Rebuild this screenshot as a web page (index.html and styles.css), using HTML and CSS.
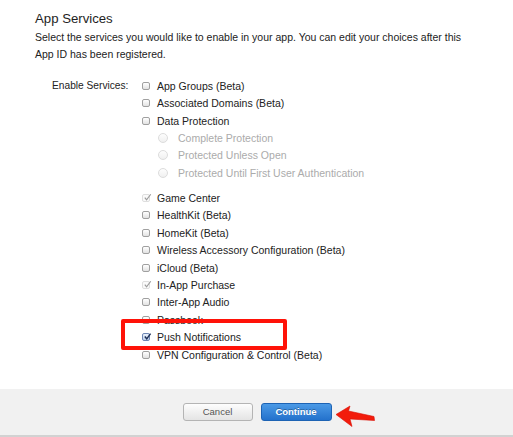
FILE: index.html
```html
<!DOCTYPE html>
<html>
<head>
<meta charset="utf-8">
<link rel="stylesheet" href="styles.css">
</head>
<body>
<div class="page">
  <div class="content">
    <h2 class="title">App Services</h2>
    <p class="desc">Select the services you would like to enable in your app. You can edit your choices after this App ID has been registered.</p>
    <div class="services">
      <div class="services-label">Enable Services:</div>
      <ul class="list">
        <li class="item"><span class="cb"></span>App Groups (Beta)</li>
        <li class="item"><span class="cb"></span>Associated Domains (Beta)</li>
        <li class="item"><span class="cb"></span>Data Protection</li>
        <li class="item sub"><span class="radio"></span>Complete Protection</li>
        <li class="item sub"><span class="radio"></span>Protected Unless Open</li>
        <li class="item sub last-sub"><span class="radio"></span>Protected Until First User Authentication</li>
        <li class="item"><span class="cb cb-disabled"><svg viewBox="0 0 10 10" class="check"><path d="M2 5.2 L4 7.6 L8.6 1.4" fill="none" stroke="#9c9c9c" stroke-width="1.3"/></svg></span>Game Center</li>
        <li class="item"><span class="cb"></span>HealthKit (Beta)</li>
        <li class="item"><span class="cb"></span>HomeKit (Beta)</li>
        <li class="item"><span class="cb"></span>Wireless Accessory Configuration (Beta)</li>
        <li class="item"><span class="cb"></span>iCloud (Beta)</li>
        <li class="item"><span class="cb cb-disabled"><svg viewBox="0 0 10 10" class="check"><path d="M2 5.2 L4 7.6 L8.6 1.4" fill="none" stroke="#9c9c9c" stroke-width="1.3"/></svg></span>In-App Purchase</li>
        <li class="item"><span class="cb"></span>Inter-App Audio</li>
        <li class="item"><span class="cb"></span>Passbook</li>
        <li class="item"><span class="cb cb-checked"><svg viewBox="0 0 10 10" class="check"><path d="M2 5 L4.2 7.6 L8.4 1.8" fill="none" stroke="#1d2f57" stroke-width="1.6"/></svg></span>Push Notifications</li>
        <li class="item"><span class="cb"></span>VPN Configuration &amp; Control (Beta)</li>
      </ul>
    </div>
  </div>
  <div class="footer">
    <button class="btn btn-cancel">Cancel</button>
    <button class="btn btn-continue">Continue</button>
  </div>
  <div class="highlight"></div>
  <svg class="arrow" width="60" height="30" viewBox="326 402 50 30">
    <polygon points="331,414.5 345,406 343.5,411 369,416.5 369.5,420.5 345,419 347,426.5" fill="#f21c0c" stroke="#d80e04" stroke-width="0.6" stroke-linejoin="round"/>
  </svg>
</div>
</body>
</html>
```

FILE: styles.css
```css
html, body {
  margin: 0;
  padding: 0;
  background: #ffffff;
}

.page {
  position: relative;
  width: 513px;
  height: 437px;
  display: flex;
  flex-direction: column;
  font-family: "Liberation Sans", Arial, sans-serif;
  color: #222222;
  overflow: hidden;
}

.content {
  flex: 1;
  padding: 11px 0 0 35px;
}

.title {
  margin: 0;
  font-size: 13.2px;
  line-height: 16px;
  font-weight: normal;
  color: #1e1e1e;
}

.desc {
  margin: 2px 0 0 0;
  width: 440px;
  font-size: 10.5px;
  line-height: 17px;
  color: #222222;
}

.services {
  display: flex;
  margin-top: 14px;
  padding-left: 17px;
}

.services-label {
  width: 90px;
  font-size: 10.2px;
  line-height: 17.45px;
  color: #222222;
}

.list {
  list-style: none;
  margin: 0;
  padding: 0;
}

.item {
  display: flex;
  align-items: center;
  height: 17.45px;
  font-size: 10.5px;
  color: #222222;
  white-space: nowrap;
}

.item.sub {
  padding-left: 16px;
  color: #ababab;
}

.item.last-sub {
  margin-bottom: 7.5px;
}

.cb {
  position: relative;
  box-sizing: border-box;
  width: 8px;
  height: 8px;
  margin-right: 7px;
  border: 1px solid #a0a0a0;
  border-radius: 2px;
  background: linear-gradient(#ffffff, #e2e2e2);
  flex: none;
}

.cb-disabled {
  border-color: #dedede;
  background: #fafafa;
}

.cb-checked {
  border-color: #6d86b3;
  background: linear-gradient(#eaf1fb, #bcd0ec);
}

.check {
  position: absolute;
  left: 0px;
  top: -2px;
  width: 9px;
  height: 9px;
}

.radio {
  box-sizing: border-box;
  width: 10px;
  height: 10px;
  margin-right: 10px;
  border: 1px solid #dcdcdc;
  border-radius: 50%;
  background: linear-gradient(#fdfdfd, #f0f0f0);
  flex: none;
}

.footer {
  height: 46px;
  flex: none;
  background: #f1f1f1;
  border-bottom: 2px solid #d2d2d2;
  display: flex;
  justify-content: center;
  align-items: center;
  gap: 8px;
  padding-left: 1px;
}

.btn {
  box-sizing: border-box;
  height: 18px;
  padding: 0;
  border-radius: 3px;
  font-family: "Liberation Sans", Arial, sans-serif;
  font-size: 9.5px;
  line-height: 16px;
}

.btn-cancel {
  width: 70px;
  border: 1px solid #b4b4b4;
  background: linear-gradient(#fdfdfd, #e4e4e4);
  color: #555555;
}

.btn-continue {
  width: 71px;
  border: 1px solid #1d63b4;
  background: linear-gradient(#4b9ae6, #2472cc);
  color: #ffffff;
  font-weight: bold;
  text-shadow: 0 -1px 0 rgba(0, 0, 0, 0.3);
}

.highlight {
  position: absolute;
  left: 121px;
  top: 319px;
  width: 166px;
  height: 31px;
  box-sizing: border-box;
  border: 4px solid #ff1208;
  border-radius: 2px;
}

.arrow {
  position: absolute;
  left: 326px;
  top: 402px;
}
```
